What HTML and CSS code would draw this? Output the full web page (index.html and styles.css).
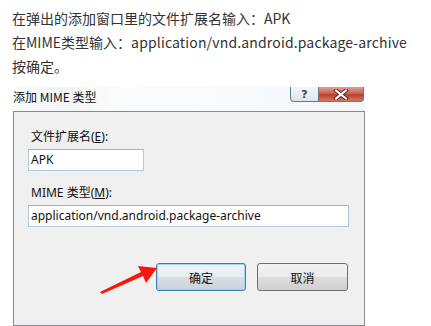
FILE: index.html
```html
<!DOCTYPE html>
<html lang="zh-CN">
<head>
  <meta charset="UTF-8">
  <title>添加 MIME 类型</title>
  <link rel="stylesheet" href="styles.css">
</head>
<body>
  <div class="intro">
    <p>在弹出的添加窗口里的文件扩展名输入：APK</p>
    <p>在MIME类型输入：<span class="latin">application/vnd.android.package-archive</span></p>
    <p>按确定。</p>
  </div>

  <div class="dialog">
    <div class="titlebar">
      <span class="title">添加 MIME 类型</span>
      <div class="caption-btns">
        <span class="cap help">?</span>
        <span class="cap close">
          <svg width="16" height="11" viewBox="0 0 16 11">
            <path d="M3 1.5 L13 9.5 M13 1.5 L3 9.5" stroke="#5a2a26" stroke-width="4" stroke-linecap="square"/>
            <path d="M3 1.5 L13 9.5 M13 1.5 L3 9.5" stroke="#fff" stroke-width="2" stroke-linecap="square"/>
          </svg>
        </span>
      </div>
    </div>

    <div class="dialog-body">
      <label class="field-label">文件扩展名(<u>E</u>):</label>
      <div class="textbox short">APK</div>

      <label class="field-label second">MIME 类型(<u>M</u>):</label>
      <div class="textbox long">application/vnd.android.package-archive</div>

      <div class="buttons">
        <button class="btn default">确定</button>
        <button class="btn">取消</button>
      </div>
    </div>

    <!-- 빨간 화살표 -->
    <svg class="arrow" width="70" height="40" viewBox="0 0 70 40">
      <polygon points="5,34 46,14 43,8 62,10 51,25 48,18 7,36" fill="#f2190f"/>
    </svg>
  </div>
</body>
</html>
```

FILE: styles.css
```css
body {
  margin: 0;
  background: #fff;
  font-family: "Noto Sans CJK SC", "Noto Sans", sans-serif;
}

.intro { padding: 6px 0 0 12px; }
.intro p {
  margin: 0;
  font-size: 14px;
  line-height: 24px;
  color: #333;
}
.intro .latin { letter-spacing: 0.15px; }

.dialog {
  position: relative;
  margin: 9px 0 0 13px;
  width: 352px;
}

.titlebar {
  height: 24px;
  display: flex;
  align-items: flex-start;
  justify-content: space-between;
  background: linear-gradient(90deg, #fafbfc 0%, #f2f4f7 15%, #fbfcfd 30%, #f4f7fa 100%);
}
.title {
  font-size: 12px;
  line-height: 20px;
  color: #111;
}
.caption-btns {
  display: flex;
  margin-right: 1px;
}
.cap {
  height: 14px;
  display: flex;
  align-items: center;
  justify-content: center;
  border: 1px solid #6b7683;
  border-top: none;
}
.help {
  width: 27px;
  border-radius: 0 0 0 4px;
  background: linear-gradient(#f4f6f9, #dfe5ec);
  font: bold 11px "DejaVu Sans", sans-serif;
  color: #444;
}
.close {
  width: 44px;
  border-left: none;
  border-radius: 0 0 4px 0;
  background: linear-gradient(#e0a39a, #c85a4c 50%, #b83c2c 51%, #d27a5f);
}

.dialog-body {
  height: 196px;
  border: 1px solid #868a8e;
  background: #f0f0f0;
  padding: 17px 15px 0 14px;
  font-family: "Noto Sans", "Noto Sans CJK SC", sans-serif;
  font-size: 12px;
  color: #111;
}

.field-label {
  display: block;
  padding-left: 3px;
  line-height: 16px;
  margin-bottom: 4px;
}
.field-label.second { margin-top: 14px; }

.textbox {
  height: 20px;
  line-height: 20px;
  padding-left: 2px;
  background: #fff;
  border: 1px solid #b6c9dc;
  border-top-color: #9fb3c8;
}
.textbox.short { width: 112px; }
.textbox.long { width: 317px; }

.buttons {
  display: flex;
  justify-content: flex-end;
  gap: 11px;
  margin-top: 36px;
  padding-right: 1px;
}
.btn {
  width: 91px;
  height: 28px;
  padding: 0;
  border: 1px solid #707070;
  border-radius: 3px;
  background: linear-gradient(#f2f2f2, #ebebeb 50%, #dddddd 51%, #cfcfcf);
  font-family: "Noto Sans CJK SC", sans-serif;
  font-size: 12px;
  color: #111;
}
.btn.default {
  width: 90px;
  border-color: #3c7fb1;
  box-shadow: inset 0 0 0 1px #9fd5f5;
  background: linear-gradient(#f0f4f7, #e6ecf0 50%, #d6dfe6 51%, #cbd3da);
}

.arrow {
  position: absolute;
  left: 82px;
  top: 171px;
}
```
